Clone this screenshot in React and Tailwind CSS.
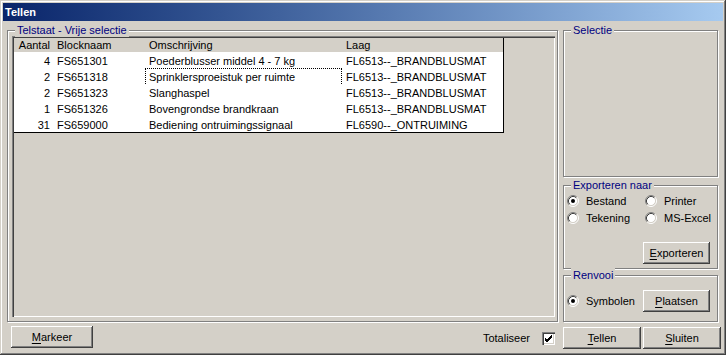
const rows = [
  [4, 'FS651301', 'Poederblusser middel 4 - 7 kg', 'FL6513--_BRANDBLUSMAT'],
  [2, 'FS651318', 'Sprinklersproeistuk per ruimte', 'FL6513--_BRANDBLUSMAT'],
  [2, 'FS651323', 'Slanghaspel', 'FL6513--_BRANDBLUSMAT'],
  [1, 'FS651326', 'Bovengrondse brandkraan', 'FL6513--_BRANDBLUSMAT'],
  [31, 'FS659000', 'Bediening ontruimingssignaal', 'FL6590--_ONTRUIMING'],
];

function GroupBox({ label, className, children }) {
  return (
    <div className={`relative border border-[#808080] shadow-[1px_1px_0_#fff,inset_1px_1px_0_#fff] ${className}`}>
      <span className="absolute left-[7px] top-[-8px] bg-[#d4d0c8] px-[2px] leading-[14px] text-[#000080]">
        {label}
      </span>
      {children}
    </div>
  );
}

function Btn({ children, className = '' }) {
  return (
    <button
      className={`flex h-[22px] items-center justify-center bg-[#d4d0c8] text-black shadow-[inset_-1px_-1px_0_#404040,inset_1px_1px_0_#fff,inset_-2px_-2px_0_#808080] ${className}`}
    >
      {children}
    </button>
  );
}

function Radio({ checked, label, className = '' }) {
  return (
    <div className={`flex h-[12px] items-center leading-[12px] ${className}`}>
      <svg width="12" height="12" viewBox="0 0 12 12" className="shrink-0">
        <circle cx="6" cy="6" r="4.5" fill="#fff" />
        <path d="M2.11 9.89 A5.5 5.5 0 0 1 9.89 2.11" fill="none" stroke="#808080" />
        <path d="M9.89 2.11 A5.5 5.5 0 0 1 2.11 9.89" fill="none" stroke="#fff" />
        <path d="M2.82 9.18 A4.5 4.5 0 0 1 9.18 2.82" fill="none" stroke="#404040" />
        <path d="M9.18 2.82 A4.5 4.5 0 0 1 2.82 9.18" fill="none" stroke="#d4d0c8" />
        {checked && <circle cx="6" cy="6" r="2" fill="#000" />}
      </svg>
      <span className="ml-[7px]">{label}</span>
    </div>
  );
}

function Mn({ c, rest }) {
  return (
    <span>
      <span className="underline underline-offset-[2px]">{c}</span>
      {rest}
    </span>
  );
}

export default function App() {
  return (
    <div className="h-[355px] w-[726px] overflow-hidden bg-[#d4d0c8] px-[3px] pt-[3px] font-['Liberation_Sans',Arial,sans-serif] text-[11px] leading-[14px] text-black shadow-[inset_-1px_-1px_0_#404040,inset_1px_1px_0_#d4d0c8,inset_-2px_-2px_0_#808080,inset_2px_2px_0_#fff]">
      {/* title bar */}
      <div className="flex h-[18px] items-center bg-gradient-to-r from-[#0a246a] to-[#a6caf0] pl-[2px] text-[11px] font-bold text-white">
        Tellen
      </div>

      <div className="mt-[9px] flex">
        <GroupBox label="Telstaat - Vrije selectie" className="ml-[4px] h-[292px] w-[551px] pb-[4px] pl-[4px] pr-[2px] pt-[5px]">
          <div className="h-full w-full p-[2px] shadow-[inset_1px_1px_0_#808080,inset_2px_2px_0_#404040,inset_-1px_-1px_0_#fff,inset_-2px_-2px_0_#d4d0c8]">
            <div className="w-[490px] border-b border-r border-black">
              <div className="grid h-[14px] grid-cols-[39px_92px_197px_161px] leading-[15px]">
                <div className="pr-[3px] text-right">Aantal</div>
                <div className="pl-[4px]">Blocknaam</div>
                <div className="pl-[4px]">Omschrijving</div>
                <div className="pl-[4px]">Laag</div>
              </div>
              {rows.map((r, i) => (
                <div key={r[1]} className="grid h-[16px] grid-cols-[39px_92px_197px_161px] overflow-hidden bg-white leading-[18px]">
                  <div className="pr-[3px] text-right">{r[0]}</div>
                  <div className="pl-[4px]">{r[1]}</div>
                  {i === 1 ? (
                    <div className="border border-dotted border-black pl-[3px] leading-[16px]">{r[2]}</div>
                  ) : (
                    <div className="pl-[4px]">{r[2]}</div>
                  )}
                  <div className="pl-[4px]">{r[3]}</div>
                </div>
              ))}
            </div>
          </div>
        </GroupBox>

        <div className="ml-[5px] flex w-[155px] flex-col">
          <GroupBox label="Selectie" className="h-[147px]" />

          <GroupBox label="Exporteren naar" className="mt-[8px] h-[84px] pl-[3px] pt-[9px]">
            <div className="grid grid-cols-[78px_70px] gap-y-[5px]">
              <Radio checked label="Bestand" />
              <Radio label="Printer" />
              <Radio label="Tekening" />
              <Radio label="MS-Excel" />
            </div>
            <div className="mt-[18px] flex justify-end pr-[7px]">
              <Btn className="w-[67px]">
                <Mn c="E" rest="xporteren" />
              </Btn>
            </div>
          </GroupBox>

          <GroupBox label="Renvooi" className="mt-[6px] h-[47px] pl-[3px] pr-[7px] pt-[14px]">
            <div className="flex h-[22px] items-center justify-between">
              <Radio checked label="Symbolen" />
              <Btn className="w-[67px]">
                <Mn c="P" rest="laatsen" />
              </Btn>
            </div>
          </GroupBox>
        </div>
      </div>

      <div className="mt-[4px] flex items-start">
        <Btn className="ml-[8px] w-[82px]">
          <Mn c="M" rest="arkeer" />
        </Btn>
        <div className="ml-auto mt-[5px] flex items-center">
          <span>Totaliseer</span>
          <div className="ml-[12px] flex h-[13px] w-[13px] items-center justify-center bg-white shadow-[inset_1px_1px_0_#808080,inset_2px_2px_0_#404040,inset_-1px_-1px_0_#fff,inset_-2px_-2px_0_#d4d0c8]">
            <svg width="9" height="9" viewBox="0 0 9 9">
              <path d="M1 4 L3 6 L8 1 M1 5 L3 7 L8 2 M1 6 L3 8 L8 3" fill="none" stroke="#000" strokeWidth="1" />
            </svg>
          </div>
        </div>
        <div className="ml-[8px] mr-[2px] mt-[1px] flex gap-[2px]">
          <Btn className="w-[78px]">
            <Mn c="T" rest="ellen" />
          </Btn>
          <Btn className="w-[78px]">
            <Mn c="S" rest="luiten" />
          </Btn>
        </div>
      </div>
    </div>
  );
}
